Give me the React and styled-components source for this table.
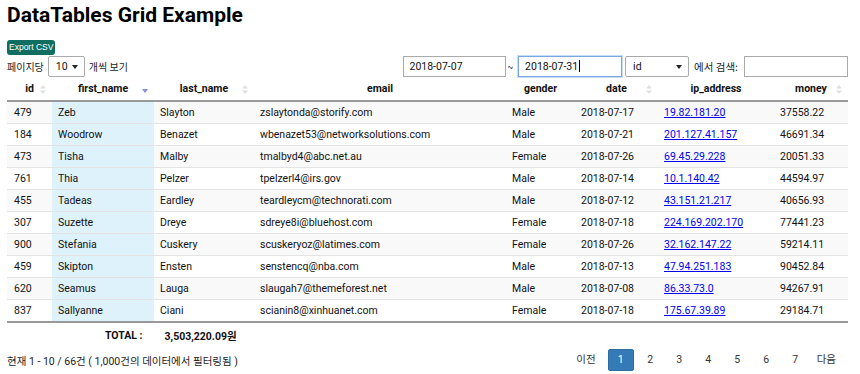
import React from "react";
import styled, { createGlobalStyle } from "styled-components";

const GlobalStyle = createGlobalStyle`
  body {
    margin: 0;
    background: #fff;
    color: #111;
    font-family: Roboto, "Noto Sans CJK KR", sans-serif;
    font-size: 10.5px;
  }
`;

const Page = styled.div`
  padding: 0 12px 0 7px;
  width: 841px;
`;

const Title = styled.h1`
  margin: 0;
  height: 40px;
  font-size: 21px;
  font-weight: 700;
  line-height: 30px;
  color: #000;
`;

const ExportButton = styled.button`
  display: block;
  height: 15px;
  padding: 0 2px;
  border: 0;
  border-radius: 3px;
  background: #0f6e5f;
  color: #fff;
  font-family: "Liberation Sans", Arial, sans-serif;
  font-size: 8.5px;
  line-height: 15px;
`;

const Toolbar = styled.div`
  display: flex;
  justify-content: space-between;
  align-items: center;
  height: 21px;
  margin-top: 1px;
`;

const Group = styled.div`
  display: flex;
  align-items: center;
`;

const Label = styled.span`
  margin: 0 ${(p) => p.mr || 0}px 0 ${(p) => p.ml || 0}px;
  font-family: "Noto Sans CJK KR", sans-serif;
  font-size: ${(p) => p.size || 10}px;
  color: #222;
`;

const SelectBox = styled.div`
  position: relative;
  box-sizing: border-box;
  width: ${(p) => p.w}px;
  height: 21px;
  padding-left: 7px;
  border: 1px solid #aaa;
  border-radius: 2px;
  background: #fff;
  font-size: 10.5px;
  line-height: 19px;
  &::after {
    content: "";
    position: absolute;
    right: 6px;
    top: 8px;
    border-left: 3px solid transparent;
    border-right: 3px solid transparent;
    border-top: 4px solid #222;
  }
`;

const TextBox = styled.div`
  box-sizing: border-box;
  width: ${(p) => p.w}px;
  height: 21px;
  padding-left: 6px;
  border: 1px solid ${(p) => (p.focus ? "#7aa7e0" : "#aaa")};
  box-shadow: ${(p) => (p.focus ? "0 0 0 1px #c7dcf5" : "none")};
  background: #fff;
  font-size: 10.5px;
  line-height: 19px;
`;

const Caret = styled.span`
  display: inline-block;
  width: 1px;
  height: 12px;
  margin-left: 1px;
  vertical-align: -2px;
  background: #000;
`;

const Table = styled.table`
  width: 841px;
  table-layout: fixed;
  border-collapse: collapse;
  border-bottom: 2px solid #999;
`;

const Th = styled.th`
  position: relative;
  height: 23px;
  padding: 0 8px;
  border-bottom: 2px solid #999;
  font-weight: 700;
  text-align: center;
  color: #111;
`;

const Tr = styled.tr`
  background: ${(p) => (p.odd ? "#f9f9f9" : "#fff")};
`;

const Td = styled.td`
  height: 21px;
  padding: 0 0 0 6px;
  border-top: 1px solid #e3e3e3;
  background: ${(p) => (p.sorted ? "#def2fb" : "transparent")};
  white-space: nowrap;
  overflow: hidden;
  color: #111;
  &:first-child {
    padding-left: 7px;
  }
`;

const IpLink = styled.a`
  color: #0000ee;
  text-decoration: underline;
`;

const SortIcon = styled.svg`
  position: absolute;
  right: 6px;
  top: 8px;
`;

const TotalRow = styled.div`
  display: flex;
  height: 25px;
  align-items: center;
  font-weight: 700;
  padding-left: 98px;
  gap: 22px;
`;

const Footer = styled.div`
  display: flex;
  justify-content: space-between;
  align-items: center;
  height: 24px;
`;

const Info = styled.div`
  font-size: 10.5px;
  color: #222;
`;

const Pager = styled.div`
  display: flex;
  align-items: center;
  padding-right: 5px;
`;

const PageBtn = styled.span`
  box-sizing: border-box;
  min-width: ${(p) => (p.active ? 26 : 29)}px;
  height: 22px;
  padding: ${(p) => (p.wide ? "0 6px" : "0")};
  margin: ${(p) => (p.active ? "0 2px 0 5px" : "0")};
  text-align: center;
  font-size: 10.5px;
  color: ${(p) => (p.active ? "#fff" : "#333")};
  background: ${(p) => (p.active ? "#337ab7" : "transparent")};
  border: 1px solid ${(p) => (p.active ? "#2e6da4" : "transparent")};
  border-radius: 2px;
  line-height: 20px;
`;

const Both = () => (
  <SortIcon width="6" height="9" viewBox="0 0 6 9">
    <path d="M3 0 L6 3.5 H0 Z M3 9 L0 5.5 H6 Z" fill="#e0e0e0" />
  </SortIcon>
);

const Desc = () => (
  <SortIcon width="6" height="9" viewBox="0 0 6 9">
    <path d="M0 4 H6 L3 8 Z" fill="#8b8bd6" />
  </SortIcon>
);

const columns = [
  { key: "id", label: "id", w: 45, icon: "both" },
  { key: "first", label: "first_name", w: 102, icon: "desc" },
  { key: "last", label: "last_name", w: 100, icon: "both" },
  { key: "email", label: "email", w: 252 },
  { key: "gender", label: "gender", w: 69 },
  { key: "date", label: "date", w: 83, icon: "both" },
  { key: "ip", label: "ip_address", w: 116 },
  { key: "money", label: "money", w: 74, icon: "both" },
];

const rows = [
  ["479", "Zeb", "Slayton", "zslaytonda@storify.com", "Male", "2018-07-17", "19.82.181.20", "37558.22"],
  ["184", "Woodrow", "Benazet", "wbenazet53@networksolutions.com", "Male", "2018-07-21", "201.127.41.157", "46691.34"],
  ["473", "Tisha", "Malby", "tmalbyd4@abc.net.au", "Female", "2018-07-26", "69.45.29.228", "20051.33"],
  ["761", "Thia", "Pelzer", "tpelzerl4@irs.gov", "Male", "2018-07-14", "10.1.140.42", "44594.97"],
  ["455", "Tadeas", "Eardley", "teardleycm@technorati.com", "Male", "2018-07-12", "43.151.21.217", "40656.93"],
  ["307", "Suzette", "Dreye", "sdreye8i@bluehost.com", "Female", "2018-07-18", "224.169.202.170", "77441.23"],
  ["900", "Stefania", "Cuskery", "scuskeryoz@latimes.com", "Female", "2018-07-26", "32.162.147.22", "59214.11"],
  ["459", "Skipton", "Ensten", "senstencq@nba.com", "Male", "2018-07-13", "47.94.251.183", "90452.84"],
  ["620", "Seamus", "Lauga", "slaugah7@themeforest.net", "Male", "2018-07-08", "86.33.73.0", "94267.91"],
  ["837", "Sallyanne", "Ciani", "scianin8@xinhuanet.com", "Female", "2018-07-18", "175.67.39.89", "29184.71"],
];

export default function App() {
  return (
    <>
      <GlobalStyle />
      <Page>
        <Title>DataTables Grid Example</Title>
        <ExportButton>Export CSV</ExportButton>
        <Toolbar>
          <Group>
            <Label mr={4}>페이지당</Label>
            <SelectBox w={37}>10</SelectBox>
            <Label ml={4}>개씩 보기</Label>
          </Group>
          <Group>
            <TextBox w={103}>2018-07-07</TextBox>
            <Label ml={2} mr={5}>~</Label>
            <TextBox w={104} focus>
              2018-07-31
              <Caret />
            </TextBox>
            <SelectBox w={64} style={{ marginLeft: 3 }}>id</SelectBox>
            <Label size={10.5} ml={5} mr={6}>에서 검색:</Label>
            <TextBox w={104} />
          </Group>
        </Toolbar>
        <Table>
          <colgroup>
            {columns.map((c) => (
              <col key={c.key} width={c.w} />
            ))}
          </colgroup>
          <thead>
            <tr>
              {columns.map((c) => (
                <Th key={c.key}>
                  {c.label}
                  {c.icon === "both" && <Both />}
                  {c.icon === "desc" && <Desc />}
                </Th>
              ))}
            </tr>
          </thead>
          <tbody>
            {rows.map((r, i) => (
              <Tr key={r[0]} odd={i % 2 === 0}>
                {r.map((v, j) => (
                  <Td key={j} sorted={j === 1}>
                    {j === 6 ? <IpLink href="#">{v}</IpLink> : v}
                  </Td>
                ))}
              </Tr>
            ))}
          </tbody>
        </Table>
        <TotalRow>
          <span>TOTAL :</span>
          <span>3,503,220.09원</span>
        </TotalRow>
        <Footer>
          <Info>현재 1 - 10 / 66건 ( 1,000건의 데이터에서 필터링됨 )</Info>
          <Pager>
            <PageBtn wide>이전</PageBtn>
            <PageBtn active>1</PageBtn>
            {["2", "3", "4", "5", "6", "7"].map((n) => (
              <PageBtn key={n}>{n}</PageBtn>
            ))}
            <PageBtn wide>다음</PageBtn>
          </Pager>
        </Footer>
      </Page>
    </>
  );
}
